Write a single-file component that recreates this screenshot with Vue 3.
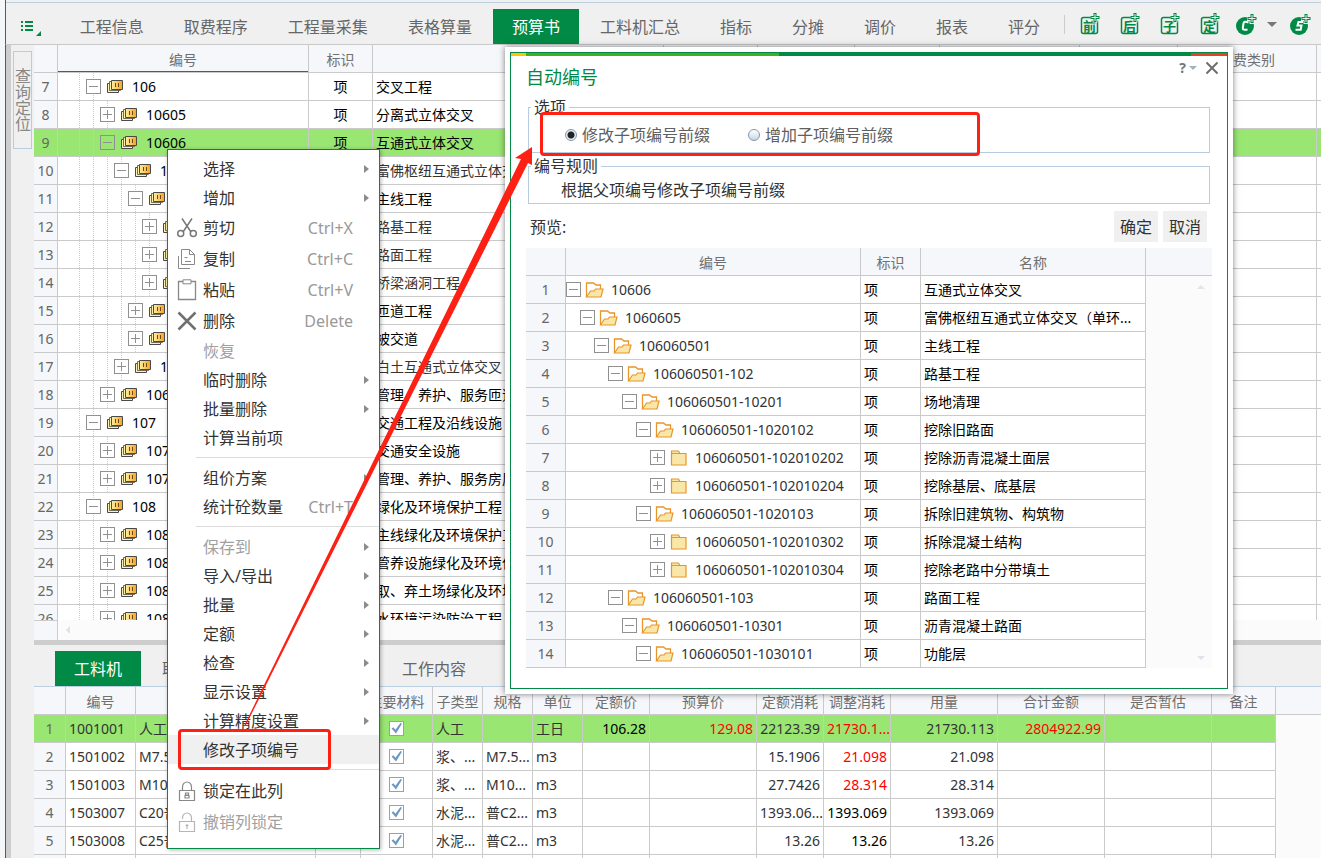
<script setup>
import { ref } from 'vue'

const tabs = ['工程信息', '取费程序', '工程量采集', '表格算量', '预算书', '工料机汇总', '指标', '分摊', '调价', '报表', '评分']
const activeTab = ref('预算书')
const insertTools = ['前', '后', '子', '定']

const budget = [
  [7, 1, 0, '106', '交叉工程', 0],
  [8, 2, 1, '10605', '分离式立体交叉', 0],
  [9, 2, 0, '10606', '互通式立体交叉', 0],
  [10, 3, 0, '1060605', '富佛枢纽互通式立体交叉', 1],
  [11, 4, 0, '106060501', '主线工程', 0],
  [12, 5, 1, '102', '路基工程', 1],
  [13, 5, 1, '103', '路面工程', 1],
  [14, 5, 1, '104', '桥梁涵洞工程', 1],
  [15, 4, 1, '106060502', '匝道工程', 0],
  [16, 4, 1, '106060503', '被交道', 0],
  [17, 3, 1, '1060610', '白土互通式立体交叉', 1],
  [18, 2, 1, '10607', '管理、养护、服务匝道', 0],
  [19, 1, 0, '107', '交通工程及沿线设施', 0],
  [20, 2, 1, '10701', '交通安全设施', 0],
  [21, 2, 1, '10706', '管理、养护、服务房屋', 0],
  [22, 1, 0, '108', '绿化及环境保护工程', 0],
  [23, 2, 1, '10801', '主线绿化及环境保护工程', 0],
  [24, 2, 1, '10802', '管养设施绿化及环境保护', 0],
  [25, 2, 1, '10803', '取、弃土场绿化及环境', 0],
  [26, 2, 1, '10804', '水环境污染防治工程', 0],
].map(([no, level, closed, code, name, muted]) => ({ no, level, closed, code, name, muted }))

const preview = [
  [0, 0, '10606', '互通式立体交叉'],
  [1, 0, '1060605', '富佛枢纽互通式立体交叉（单环...'],
  [2, 0, '106060501', '主线工程'],
  [3, 0, '106060501-102', '路基工程'],
  [4, 0, '106060501-10201', '场地清理'],
  [5, 0, '106060501-1020102', '挖除旧路面'],
  [6, 1, '106060501-102010202', '挖除沥青混凝土面层'],
  [6, 1, '106060501-102010204', '挖除基层、底基层'],
  [5, 0, '106060501-1020103', '拆除旧建筑物、构筑物'],
  [6, 1, '106060501-102010302', '拆除混凝土结构'],
  [6, 1, '106060501-102010304', '挖除老路中分带填土'],
  [3, 0, '106060501-103', '路面工程'],
  [4, 0, '106060501-10301', '沥青混凝土路面'],
  [5, 0, '106060501-1030101', '功能层'],
].map(([level, closed, code, name]) => ({ level, closed, code, name }))

const resourceHeads = ['', '编号', '名称', '', '主要材料', '子类型', '规格', '单位', '定额价', '预算价', '定额消耗', '调整消耗', '用量', '合计金额', '是否暂估', '备注', '']
const resources = [
  { code: '1001001', name: '人工', type: '人工', spec: '', unit: '工日', price: '106.28', budget: '129.08', quota: '22123.39', adj: '21730.1...', red: true, qty: '21730.113', total: '2804922.99' },
  { code: '1501002', name: 'M7.5水泥砂浆', type: '浆、...', spec: 'M7.5...', unit: 'm3', quota: '15.1906', adj: '21.098', red: true, qty: '21.098' },
  { code: '1501003', name: 'M10水泥砂浆', type: '浆、...', spec: 'M10...', unit: 'm3', quota: '27.7426', adj: '28.314', red: true, qty: '28.314' },
  { code: '1503007', name: 'C20普通混凝土', type: '水泥...', spec: '普C2...', unit: 'm3', quota: '1393.06...', adj: '1393.069', qty: '1393.069' },
  { code: '1503008', name: 'C25普通混凝土', type: '水泥...', spec: '普C2...', unit: 'm3', quota: '13.26', adj: '13.26', qty: '13.26' },
  { code: '1503009', name: '', type: '', spec: '', unit: '', quota: '', adj: '', qty: '' },
]

const menu = [
  { label: '选择', sub: 1 },
  { label: '增加', sub: 1 },
  { label: '剪切', icon: 'cut', key: 'Ctrl+X' },
  { label: '复制', icon: 'copy', key: 'Ctrl+C' },
  { label: '粘贴', icon: 'paste', key: 'Ctrl+V' },
  { label: '删除', icon: 'del', key: 'Delete' },
  { label: '恢复', off: 1 },
  { label: '临时删除', sub: 1 },
  { label: '批量删除', sub: 1 },
  { label: '计算当前项' },
  { sep: 1 },
  { label: '组价方案', sub: 1 },
  { label: '统计砼数量', key: 'Ctrl+T' },
  { sep: 1 },
  { label: '保存到', sub: 1, off: 1 },
  { label: '导入/导出', sub: 1 },
  { label: '批量', sub: 1 },
  { label: '定额', sub: 1 },
  { label: '检查', sub: 1 },
  { label: '显示设置', sub: 1 },
  { label: '计算精度设置', sub: 1 },
  { label: '修改子项编号', hot: 1 },
  { sep: 1 },
  { label: '锁定在此列', icon: 'lock' },
  { label: '撤销列锁定', icon: 'unlock', off: 1 },
]

const mode = ref('edit')
</script>

<template>
  <div class="app">
    <svg width="0" height="0" class="defs" aria-hidden="true">
      <defs>
        <linearGradient id="gold" x1="0" y1="0" x2="1" y2="0">
          <stop offset="0" stop-color="#fdf0a4" />
          <stop offset="1" stop-color="#fb9f1c" />
        </linearGradient>
      </defs>
    </svg>
    <header class="toolbar">
      <button class="menu-btn" aria-label="菜单">
        <svg width="22" height="18" viewBox="0 0 22 18">
          <path d="M0 2h2M0 6h2M0 10h2M4 2h8M4 6h8M4 10h8" stroke="#008a45" stroke-width="2" />
          <path d="M20 11v5h-5z" fill="#008a45" />
        </svg>
      </button>
      <nav class="tabs">
        <button v-for="t in tabs" :key="t" class="tab" :class="{ active: t === activeTab }" @click="activeTab = t">{{ t }}</button>
      </nav>
      <div class="tools">
        <button v-for="c in insertTools" :key="c" class="tool" :aria-label="c">
          <svg width="22" height="24" viewBox="0 0 22 24">
            <rect x="1.500" y="5.500" width="16" height="16" rx="2" fill="none" stroke="#008a45" stroke-width="1.500" />
            <text x="9.500" y="19" text-anchor="middle" class="tool-char">{{ c }}</text>
            <path d="M15 1.500v9M10.500 6h9" stroke="#f0f0f0" stroke-width="5" />
            <path d="M15 1v9M10.500 5.500h9" stroke="#008a45" stroke-width="3" />
            <path d="M15 2v7M11.500 5.500h7" stroke="#f0f0f0" />
          </svg>
        </button>
        <button class="tool round" aria-label="C">
          <svg width="22" height="24" viewBox="0 0 22 24">
            <circle cx="9" cy="14" r="9" fill="#008a45" />
            <path d="M12.500 10.500Q8 8.500 7.500 11.500L6.800 16Q6.500 18.500 11.500 17.500" fill="none" stroke="#fff" stroke-width="2" />
            <path d="M16 1v11M11 6.500h10" stroke="#f0f0f0" stroke-width="5" />
            <path d="M16 2v9M11.500 6.500h9" stroke="#008a45" stroke-width="3" />
            <path d="M16 3v7M12.500 6.500h7" stroke="#f0f0f0" />
          </svg>
        </button>
        <span class="caret"></span>
        <button class="tool round" aria-label="S">
          <svg width="22" height="24" viewBox="0 0 22 24">
            <circle cx="9" cy="14" r="9" fill="#008a45" />
            <path d="M13 10H8.500L7.500 13.500H11.500L10.700 17.800H5.500" fill="none" stroke="#fff" stroke-width="2" />
            <path d="M16 1v11M11 6.500h10" stroke="#f0f0f0" stroke-width="5" />
            <path d="M16 2v9M11.500 6.500h9" stroke="#008a45" stroke-width="3" />
            <path d="M16 3v7M12.500 6.500h7" stroke="#f0f0f0" />
          </svg>
        </button>
      </div>
    </header>

    <div class="body">
      <aside class="rail">
        <button class="locate">查询定位</button>
      </aside>
      <main class="panes">
        <section class="upper">
          <div class="upper-view">
            <table class="grid budget">
              <colgroup>
                <col class="w24" /><col class="w251" /><col class="w64" /><col class="w291" /><col class="w94" /><col class="w97" /><col class="w85" /><col class="w140" /><col class="w98" /><col class="w139" /><col />
              </colgroup>
              <thead>
                <tr><th></th><th class="sorted">编号</th><th>标识</th><th>名称</th><th></th><th></th><th></th><th></th><th></th><th>取费类别</th><th></th></tr>
              </thead>
              <tbody>
                <tr v-for="r in budget" :key="r.no" :class="{ sel: r.no === 9, muted: r.muted }">
                  <td class="no">{{ r.no }}</td>
                  <td class="tree">
                    <span class="guides" :style="{ width: r.level * 14 + 1 + 'px' }"></span>
                    <span class="node" :style="{ paddingLeft: r.level * 14 + 14 + 'px' }">
                      <button class="twist" :aria-label="r.closed ? '展开' : '折叠'">
                        <svg width="15" height="15" viewBox="0 0 15 15">
                          <rect x=".5" y=".5" width="14" height="14" class="tw-box" />
                          <path :d="r.closed ? 'M3 7.500h9M7.500 3v9' : 'M3 7.500h9'" class="tw-sign" />
                        </svg>
                      </button>
                      <svg class="card" width="16" height="13" viewBox="0 0 16 13">
                        <path d="M3 3.500H.5v9h11V10" fill="#fdf3b0" stroke="#4a4a4a" />
                        <path d="M4 1.500H2.500v9h11V9" fill="#fdf3b0" stroke="#4a4a4a" stroke-width=".8" />
                        <path d="M4.500.5h11v9h-11z" fill="url(#gold)" stroke="#4a4a4a" />
                        <path d="M8.500 3v4M11.500 3v4" stroke="#6b4a10" />
                      </svg>
                      <span>{{ r.code }}</span>
                    </span>
                  </td>
                  <td class="mid">项</td>
                  <td class="name">{{ r.name }}</td>
                  <td></td><td></td><td></td><td></td><td></td><td></td><td></td>
                </tr>
              </tbody>
            </table>
          </div>
          <div class="hscroll"><span class="hs-corner"></span><span class="hs-arrow"></span></div>
        </section>

        <section class="lower">
          <nav class="subtabs">
            <button class="tab active">工料机</button>
            <button class="tab">取费程序</button>
            <button class="tab work">工作内容</button>
          </nav>
          <table class="grid resource">
            <colgroup>
              <col class="w32" /><col class="w70" /><col class="w180" /><col class="w45" /><col class="w72" /><col class="w50" /><col class="w50" /><col class="w50" /><col class="w67" /><col class="w107" /><col class="w67" /><col class="w67" /><col class="w107" /><col class="w107" /><col class="w107" /><col class="w64" /><col />
            </colgroup>
            <thead>
              <tr><th v-for="(h, i) in resourceHeads" :key="i">{{ h }}</th></tr>
            </thead>
            <tbody>
              <tr v-for="(r, i) in resources" :key="r.code" :class="{ sel: i === 0 }">
                <td class="no">{{ i + 1 }}</td>
                <td>{{ r.code }}</td>
                <td>{{ r.name }}</td>
                <td></td>
                <td class="mid"><input type="checkbox" checked :aria-label="r.code + ' 主要材料'" /></td>
                <td>{{ r.type }}</td>
                <td>{{ r.spec }}</td>
                <td>{{ r.unit }}</td>
                <td class="num dark">{{ r.price }}</td>
                <td class="num red">{{ r.budget }}</td>
                <td class="num">{{ r.quota }}</td>
                <td class="num" :class="r.red ? 'red' : 'dark'">{{ r.adj }}</td>
                <td class="num">{{ r.qty }}</td>
                <td class="num red">{{ r.total }}</td>
                <td></td>
                <td></td>
                <td class="rest"></td>
              </tr>
            </tbody>
          </table>
        </section>
      </main>
    </div>

    <div class="ctx" role="menu">
      <template v-for="(m, i) in menu" :key="i">
        <hr v-if="m.sep" />
        <button v-else class="mi" role="menuitem" :class="{ tall: m.icon, hot: m.hot }" :disabled="!!m.off">
          <span class="mi-icon">
            <svg v-if="m.icon === 'cut'" width="20" height="20" viewBox="0 0 20 20" fill="none" stroke="#777" stroke-width="1.500">
              <path d="M5 0.500l9 13.500M15 0.500L6 14" /><circle cx="3.700" cy="15.500" r="3" /><circle cx="16.300" cy="15.500" r="3" />
            </svg>
            <svg v-else-if="m.icon === 'copy'" width="20" height="22" viewBox="0 0 20 22" fill="none" stroke="#888">
              <path d="M4.500 16.500v-15h8l5 5v10zM12.500 1.500v5h5M1.500 8v12.500H13M7.500 9.500h3M8 13.500h6" />
            </svg>
            <svg v-else-if="m.icon === 'paste'" width="20" height="22" viewBox="0 0 20 22" fill="none" stroke="#888">
              <path d="M6 2.500H1.500v18h17v-18H14" stroke-width="1.300" /><path d="M6 .8h8v4H6z" />
            </svg>
            <svg v-else-if="m.icon === 'del'" width="20" height="20" viewBox="0 0 20 20">
              <path d="M1.500 1.500l17 17M18.500 1.500l-17 17" stroke="#707070" stroke-width="2.500" />
            </svg>
            <svg v-else-if="m.icon" width="18" height="20" viewBox="0 0 18 20" fill="none" :stroke="m.off ? '#b5b5b5' : '#888'" stroke-width="1.200">
              <path d="M1.500 9.500h15v10h-15z" />
              <path :d="m.off ? 'M4.500 7V6a4.500 5 0 0 1 9 0V9' : 'M4.500 9V6a4.500 5 0 0 1 9 0V9'" />
              <path v-if="m.off" d="M9 12v5M7.500 13.500h3" />
              <path v-else d="M7.500 12h3v2h-3zM7 14.500h4v2.500H7z" />
            </svg>
          </span>
          <span class="mi-text">{{ m.label }}</span>
          <span v-if="m.key" class="mi-key">{{ m.key }}</span>
          <span v-if="m.sub" class="mi-sub"></span>
        </button>
      </template>
    </div>

    <div class="dialog" role="dialog" aria-label="自动编号">
      <div class="frame">
        <div class="stripe"><i class="s1"></i><i class="s2"></i><i class="s3"></i><i class="s4"></i></div>
        <div class="title">
          <h1>自动编号</h1>
          <div class="winbtns">
            <button class="help" aria-label="帮助">?<span class="help-caret"></span></button>
            <button class="close" aria-label="关闭">
              <svg width="14" height="14" viewBox="0 0 14 14"><path d="M1.500 1.500l11 11M12.500 1.500l-11 11" stroke="#6e6e6e" stroke-width="2" /></svg>
            </button>
          </div>
        </div>
        <fieldset class="opts">
          <legend>选项</legend>
          <label><input v-model="mode" type="radio" name="mode" value="edit" />修改子项编号前缀</label>
          <label><input v-model="mode" type="radio" name="mode" value="add" />增加子项编号前缀</label>
        </fieldset>
        <fieldset class="rule">
          <legend>编号规则</legend>
          <p>根据父项编号修改子项编号前缀</p>
        </fieldset>
        <div class="actions">
          <span>预览:</span>
          <button>确定</button>
          <button>取消</button>
        </div>
        <div class="preview">
          <table class="grid">
            <colgroup><col class="w40" /><col class="w295" /><col class="w60" /><col class="w225" /><col /></colgroup>
            <thead><tr><th></th><th>编号</th><th>标识</th><th>名称</th><th></th></tr></thead>
            <tbody>
              <tr v-for="(r, i) in preview" :key="r.code">
                <td class="no">{{ i + 1 }}</td>
                <td class="tree">
                  <span class="pnode" :style="{ paddingLeft: r.level * 14 + 'px' }">
                    <button class="twist" :aria-label="r.closed ? '展开' : '折叠'">
                      <svg width="15" height="15" viewBox="0 0 15 15">
                        <rect x=".5" y=".5" width="14" height="14" class="tw-box" />
                        <path :d="r.closed ? 'M3 7.500h9M7.500 3v9' : 'M3 7.500h9'" class="tw-sign" />
                      </svg>
                    </button>
                    <svg v-if="r.closed" class="folder" width="20" height="16" viewBox="0 0 20 16">
                      <path d="M2.500 3.500v-2.500h7l1.500 2.500h6v11.500h-14.500z" fill="#f8e7a8" stroke="#e8952a" stroke-width="1.200" />
                      <path d="M2.500 3.500h9" stroke="#e8952a" />
                    </svg>
                    <svg v-else class="folder" width="20" height="16" viewBox="0 0 20 16">
                      <path d="M1.500 15V1h7l2.500 2h4.500v4" fill="#fff" stroke="#e8952a" stroke-width="1.300" />
                      <path d="M1.500 15l4-6h3.500l1.500-2h7.500l-2 8z" fill="#f8e7a8" stroke="#e8952a" stroke-width="1.200" />
                    </svg>
                    <span>{{ r.code }}</span>
                  </span>
                </td>
                <td class="dark">项</td>
                <td class="dark">{{ r.name }}</td>
                <td class="rest"></td>
              </tr>
            </tbody>
          </table>
          <span class="vs up"></span><span class="vs down"></span>
        </div>
      </div>
    </div>

    <div class="mark mark-menu"></div>
    <div class="mark mark-radio"></div>
    <svg class="pointer" width="300" height="590" viewBox="0 0 300 590">
      <path d="M4 585L281 18L275 17L292 6V24L288 22L6 584z" fill="#ff2014" />
    </svg>
  </div>
</template>

<style>
body {
  margin: 0;
  overflow: hidden;
}
</style>

<style scoped>
.app {
  position: relative;
  box-sizing: border-box;
  display: flex;
  flex-direction: column;
  height: 100vh;
  overflow: hidden;
  padding-left: 5px;
  background: #f5f6f7;
  color: #333;
  font: 14px/20px 'Noto Sans', 'Noto Sans CJK SC', sans-serif;
}
.defs {
  position: absolute;
}
button {
  padding: 0;
  border: 0;
  background: none;
  color: inherit;
  font: inherit;
}
svg {
  display: block;
}
.toolbar {
  box-sizing: border-box;
  display: flex;
  align-items: stretch;
  height: 45px;
  padding: 6px 9px 0 0;
  border-left: 1px solid #008a45;
  border-bottom: 1px solid #c9c9c9;
  background: linear-gradient(#f0f0f0 2px, #bccfe0 2px, #bccfe0 3px, #f0f0f0 3px);
}
.menu-btn {
  display: flex;
  align-items: flex-start;
  width: 56px;
  padding: 14px 0 0 15px;
}
.tabs {
  display: flex;
  padding-top: 3px;
}
.tab {
  height: 35px;
  padding: 0 20px;
  color: #666;
  font-size: 16px;
  line-height: 32px;
  white-space: nowrap;
}
.tab.active {
  margin: 0 1px;
  padding: 0 19px;
  background: #008a45;
  color: #fff;
}
.toolbar .tab.active {
  margin: 0;
  padding: 0 20px;
  background: linear-gradient(#008a45, #008a45) center / calc(100% - 2px) 100% no-repeat;
}
.tools {
  display: flex;
  align-items: flex-start;
  gap: 18px;
  margin-left: 4px;
  padding: 6px 0 0 16px;
  background: linear-gradient(#ccc, #ccc) 0 9px / 1px 19px no-repeat;
}
.tool {
  flex: none;
  width: 22px;
}
.tool-char {
  fill: #008a45;
  font-size: 13px;
  font-weight: 700;
}
.round {
  margin-left: -4px;
}
.caret {
  margin: 10px 0 0 -9px;
  border: 5px solid transparent;
  border-top-color: #777;
  border-bottom: 0;
}
.round:last-child {
  margin-left: -5px;
}
.body {
  flex: 1;
  display: flex;
  min-height: 0;
  border-left: 1px solid #008a45;
}
.rail {
  box-sizing: border-box;
  flex: none;
  width: 28px;
  padding: 6px 2px 0 2px;
  border-left: 5px solid #cdcdcd;
  background: #f0f0f0;
}
.locate {
  box-sizing: border-box;
  width: 19px;
  height: 98px;
  padding: 0 1px;
  border: 1px solid #b9cbdc;
  color: #888;
  font-size: 16px;
  line-height: 16px;
  word-break: break-all;
}
.panes {
  flex: 1;
  display: flex;
  flex-direction: column;
  min-width: 0;
}
.upper {
  flex: 1;
  display: flex;
  flex-direction: column;
  min-height: 0;
  background: #fff;
}
.upper-view {
  flex: 1;
  min-height: 0;
  overflow: hidden;
}
.hscroll {
  flex: none;
  display: flex;
  align-items: center;
  height: 20px;
  background: #fbfbfb;
}
.hs-corner {
  box-sizing: border-box;
  width: 24px;
  height: 20px;
  border-top: 1px solid #ccc;
  border-right: 1px solid #ccc;
  background: #f5f7fa;
}
.hs-arrow {
  margin-left: 8px;
  border: 4px solid transparent;
  border-right-color: #dfe2ea;
  border-left: 0;
}
.lower {
  flex: none;
  height: 218px;
  overflow: hidden;
  box-sizing: border-box;
  border-top: 5px solid #cdcdcd;
  background: #fbfbfb;
}
.subtabs {
  box-sizing: border-box;
  display: flex;
  height: 42px;
  padding: 6px 0 0 20px;
  border-bottom: 1px solid #bccfe0;
  background: #f0f0f0;
}
.work {
  margin-left: 136px;
}
.grid {
  width: 100%;
  table-layout: fixed;
  border-collapse: separate;
  border-spacing: 0;
}
.grid th,
.grid td {
  box-sizing: border-box;
  height: 28px;
  padding: 0 3px;
  border-right: 1px solid #cacaca;
  border-bottom: 1px solid #cacaca;
  overflow: hidden;
  line-height: 20px;
  white-space: nowrap;
  text-align: left;
}
.grid th {
  padding: 2px 0 0;
  background: #f5f7fa;
  color: #707070;
  font-weight: 400;
  text-align: center;
}
.grid td {
  background: #fff;
}
.grid .sorted {
  background: linear-gradient(#008a45, #008a45) 0 26px / 100% 1px no-repeat #f5f7fa;
}
.grid .no {
  padding: 0;
  background: #f5f7fa;
  color: #666;
  text-align: center;
}
.grid .sel td {
  background: #99e673;
}
.grid .mid {
  text-align: center;
}
.grid .num {
  text-align: right;
}
.grid .dark,
.budget .mid,
.budget .name,
.budget .tree {
  color: #000;
}
.budget .muted .name {
  color: #333;
}
.grid .red {
  color: #f00;
}
.grid .rest,
.grid .sel .rest {
  border: 0;
  background: #fbfbfb;
}
.grid th:last-child,
.grid td:last-child {
  border-right: 0;
}
.grid .tree {
  position: relative;
  padding: 0;
}
.guides {
  position: absolute;
  top: 0;
  bottom: 0;
  left: 21px;
  background: linear-gradient(90deg, #ccc 1px, transparent 1px) 0 0 / 14px 100%;
  mask-image: repeating-linear-gradient(#000 0 1px, transparent 1px 2px);
}
.node,
.pnode {
  position: relative;
  display: flex;
  align-items: center;
}
.twist {
  flex: none;
  background: #fff;
}
.sel .twist {
  background: #99e673;
}
.tw-box {
  fill: none;
  stroke: #909090;
}
.tw-sign {
  fill: none;
  stroke: #909090;
}
.card {
  margin: 0 9px 0 6px;
}
.folder {
  margin: 0 6px 0 4px;
}
.w24 { width: 24px; }
.w32 { width: 32px; }
.w40 { width: 40px; }
.w45 { width: 45px; }
.w50 { width: 50px; }
.w60 { width: 60px; }
.w64 { width: 64px; }
.w67 { width: 67px; }
.w70 { width: 70px; }
.w72 { width: 72px; }
.w85 { width: 85px; }
.w94 { width: 94px; }
.w97 { width: 97px; }
.w98 { width: 98px; }
.w107 { width: 107px; }
.w139 { width: 139px; }
.w140 { width: 140px; }
.w180 { width: 180px; }
.w225 { width: 225px; }
.w251 { width: 251px; }
.w291 { width: 291px; }
.w295 { width: 295px; }
input[type='checkbox'] {
  appearance: none;
  box-sizing: border-box;
  display: block;
  width: 15px;
  height: 15px;
  margin: 0 auto;
  border: 1px solid #86a5c6;
  background: #fff;
}
input[type='checkbox']::before {
  content: '';
  display: block;
  width: 13px;
  height: 13px;
  background: #6d97c4;
  clip-path: polygon(12% 50%, 26% 40%, 42% 60%, 80% 8%, 92% 14%, 46% 88%);
}
.ctx {
  position: absolute;
  z-index: 2;
  top: 149px;
  left: 167px;
  box-sizing: border-box;
  width: 213px;
  padding: 4px 0 11px;
  border: 1px solid #008a45;
  background: #fff;
  box-shadow: 1px 1px 4px rgba(0, 0, 0, 0.3);
}
.mi {
  display: flex;
  align-items: center;
  width: 100%;
  height: 29px;
  padding-right: 10px;
  color: #333;
  font-size: 16px;
  text-align: left;
}
.mi.tall {
  height: 31px;
}
.mi.hot {
  background: #f0f0f0;
}
.mi:disabled {
  color: #a0a0a0;
}
.mi-icon {
  display: flex;
  justify-content: center;
  width: 20px;
  margin: 0 6px 0 9px;
}
.mi-text {
  flex: 1;
}
.mi-key {
  margin-right: 16px;
  color: #999;
}
.mi-sub {
  border: 4px solid transparent;
  border-left: 5px solid #8c8c8c;
  border-right: 0;
}
.ctx hr {
  height: 1px;
  margin: 5px 0 5px 28px;
  border: 0;
  background: #dcdcdc;
}
.dialog {
  position: absolute;
  z-index: 3;
  top: 47px;
  left: 505px;
  box-sizing: border-box;
  width: 728px;
  padding: 5px;
  background: #fff;
  box-shadow: 0 0 6px rgba(0, 0, 0, 0.5);
}
.frame {
  border: 1px solid #008a45;
  border-top: 0;
  padding-bottom: 20px;
}
.stripe {
  display: flex;
  height: 4px;
}
.stripe i {
  flex: none;
  border-top: 1px solid #008a45;
  box-sizing: border-box;
}
.stripe .s1 { width: 15px; background: #ffc400; }
.stripe .s2 { width: 253px; background: #3db122; }
.stripe .s3 { flex: 1; background: #008a45; }
.stripe .s4 { width: 36px; background: #e04526; }
.title {
  display: flex;
  justify-content: space-between;
  height: 42px;
  padding: 0 8px 0 15px;
}
.title h1 {
  margin: 8px 0 0;
  color: #008a45;
  font-size: 18px;
  font-weight: 400;
  line-height: 26px;
}
.winbtns {
  display: flex;
  align-items: flex-start;
  gap: 8px;
}
.help {
  display: flex;
  align-items: center;
  gap: 3px;
  margin-top: 2px;
  color: #6e7880;
  font-weight: 700;
}
.help-caret {
  border: 4px solid transparent;
  border-top-color: #9db3c6;
  border-bottom: 0;
}
.close {
  margin-top: 5px;
}
fieldset {
  position: relative;
  box-sizing: border-box;
  margin: 9px 17px 0;
  padding: 0;
  border: 1px solid #b9cbdf;
  font-size: 16px;
}
legend {
  position: absolute;
  top: -11px;
  left: 2px;
  padding: 0 3px;
  background: #fff;
  line-height: 20px;
}
.opts {
  display: flex;
  align-items: center;
  gap: 38px;
  height: 46px;
  padding: 10px 0 0 36px;
  color: #606060;
}
.opts legend {
  color: #333;
}
.opts label {
  display: flex;
  align-items: center;
  gap: 5px;
}
input[type='radio'] {
  appearance: none;
  box-sizing: border-box;
  width: 12px;
  height: 12px;
  margin: 0;
  border: 1px solid #8298ad;
  border-radius: 50%;
  background: linear-gradient(#fff, #c9d6e2);
}
input[type='radio']:checked {
  background: radial-gradient(circle, #222 3px, #e4ecf3 4px);
}
.rule {
  height: 38px;
  margin-top: 13px;
  padding: 13px 0 0 32px;
}
.rule p {
  margin: 0;
}
.actions {
  display: flex;
  align-items: center;
  gap: 5px;
  height: 31px;
  padding: 7px 20px 6px 19px;
  font-size: 16px;
}
.actions span {
  flex: 1;
}
.actions button {
  width: 44px;
  height: 31px;
  background: #f0f0f0;
}
.preview {
  position: relative;
  margin: 0 15px;
}
.vs {
  position: absolute;
  right: 7px;
  border: 4px solid transparent;
}
.vs.up {
  top: 33px;
  border-bottom-color: #e4e4ea;
}
.vs.down {
  bottom: 4px;
  border-top-color: #dfe2ea;
}
.mark {
  position: absolute;
  z-index: 4;
  box-sizing: border-box;
  border: 3px solid #ff2014;
  border-radius: 4px;
}
.mark-menu {
  top: 729px;
  left: 178px;
  width: 153px;
  height: 41px;
}
.mark-radio {
  top: 112px;
  left: 540px;
  width: 440px;
  height: 44px;
}
.pointer {
  position: absolute;
  z-index: 4;
  top: 141px;
  left: 240px;
}
</style>
